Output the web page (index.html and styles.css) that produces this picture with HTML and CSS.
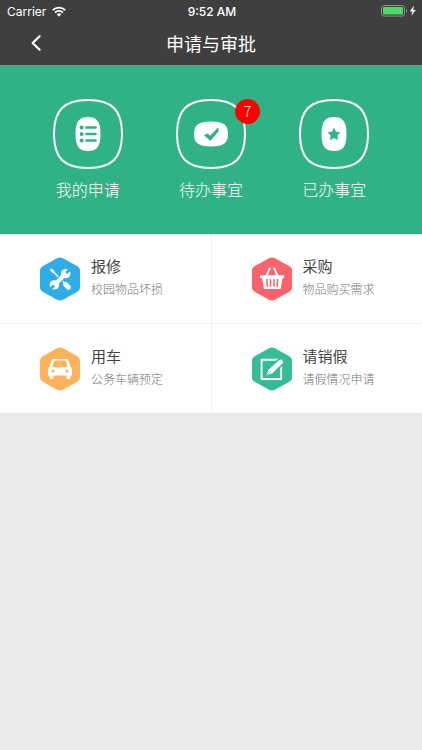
FILE: index.html
```html
<!DOCTYPE html>
<html lang="zh-CN">
<head>
<meta charset="utf-8">
<meta name="viewport" content="width=device-width, initial-scale=1">
<title>申请与审批</title>
<link rel="stylesheet" href="styles.css">
</head>
<body>
<header class="top">
  <div class="status">
    <div class="status-left">
      <span>Carrier</span>
      <svg class="wifi" viewBox="0 0 14 11" aria-hidden="true">
        <path d="M.8 4.100a9 9 0 0 1 12.400 0" fill="none" stroke="#fff" stroke-width="1.900"/>
        <path d="M3 6.500a5.800 5.800 0 0 1 8 0" fill="none" stroke="#fff" stroke-width="1.800"/>
        <path d="M4.700 8.300a3.400 3.400 0 0 1 4.600 0L7 10.700z" fill="#fff"/>
      </svg>
    </div>
    <div class="clock">9:52 AM</div>
    <div class="status-right">
      <svg class="battery" viewBox="0 0 36 12" aria-hidden="true">
        <rect x=".5" y=".5" width="23" height="10.600" rx="2.400" fill="none" stroke="#8f8f8f"/>
        <rect x="2" y="2" width="20" height="7.600" rx="1.200" fill="#4cd964"/>
        <path d="M25 4v3.600q1.300-.5 1.300-1.800T25 4z" fill="#8f8f8f"/>
        <path d="M32.800.8 28.800 6.500h2.500L30.400 10.800 34.800 5h-2.600z" fill="#fff"/>
      </svg>
    </div>
  </div>
  <nav class="nav">
    <button class="back" type="button" aria-label="返回">
      <svg viewBox="0 0 12 18" aria-hidden="true"><path d="M9.600 2.200 2.600 9l7 6.800" fill="none" stroke="#fff" stroke-width="2.200" stroke-linecap="round" stroke-linejoin="round"/></svg>
    </button>
    <h1 class="title">申请与审批</h1>
  </nav>
</header>
<main>
  <section class="hero">
    <a class="entry" href="#mine">
      <span class="ring">
        <svg viewBox="0 0 70 70" aria-hidden="true">
          <path class="outline" d="M35 1C59 1 69 11 69 35S59 69 35 69 1 59 1 35 11 1 35 1z"/>
          <path d="M35 18C43.500 18 47.500 22 47.500 35S43.500 52 35 52 22.500 48 22.500 35 26.500 18 35 18z" fill="#fff"/>
          <g fill="#31b186"><circle cx="28.600" cy="28.500" r="2"/><circle cx="28.600" cy="35" r="2"/><circle cx="28.600" cy="41.500" r="2"/>
          <rect x="32.200" y="27.200" width="11.600" height="2.600" rx="1.300"/><rect x="32.200" y="33.700" width="11.600" height="2.600" rx="1.300"/><rect x="32.200" y="40.200" width="11.600" height="2.600" rx="1.300"/></g>
        </svg>
      </span>
      <span class="entry-label">我的申请</span>
    </a>
    <a class="entry" href="#todo">
      <span class="ring">
        <svg viewBox="0 0 70 70" aria-hidden="true">
          <path class="outline" d="M35 1C59 1 69 11 69 35S59 69 35 69 1 59 1 35 11 1 35 1z"/>
          <path d="M35 22.500C48 22.500 52 26.500 52 35S48 47.500 35 47.500 18 43.500 18 35 22 22.500 35 22.500z" fill="#fff"/>
          <path d="M28.300 36.200 32 34.800 34 37.200 42 28.800 42.300 32.200 34.300 41.600z" fill="#31b186" stroke="#31b186" stroke-width=".6" stroke-linejoin="round"/>
        </svg>
        <span class="badge">7</span>
      </span>
      <span class="entry-label">待办事宜</span>
    </a>
    <a class="entry" href="#done">
      <span class="ring">
        <svg viewBox="0 0 70 70" aria-hidden="true">
          <path class="outline" d="M35 1C59 1 69 11 69 35S59 69 35 69 1 59 1 35 11 1 35 1z"/>
          <path d="M35 18C43.500 18 47.500 22 47.500 35S43.500 52 35 52 22.500 48 22.500 35 26.500 18 35 18z" fill="#fff"/>
          <path d="M35 29.200 36.800 33 41 33.600 38 36.500 38.700 40.700 35 38.700 31.300 40.700 32 36.500 29 33.600 33.200 33z" fill="#31b186" stroke="#31b186" stroke-width=".6" stroke-linejoin="round"/>
        </svg>
      </span>
      <span class="entry-label">已办事宜</span>
    </a>
  </section>
  <section class="grid">
    <a class="card" href="#repair">
      <svg class="hex" viewBox="0 0 42 44" aria-hidden="true">
        <path fill="#2fade6" d="M18 1.300q3-1.500 6 0l14 7.600q3 1.700 3 5v16.200q0 3.300-3 5l-14 7.600q-3 1.500-6 0l-14-7.600q-3-1.700-3-5V13.900q0-3.300 3-5z"/>
        <path d="M13.500 14 25 25.500" stroke="#fff" stroke-width="1.500"/>
        <path d="M11.500 12.200 14.600 13.200 15.200 15.800 12.600 14.900z" fill="#fff" stroke="#fff" stroke-linejoin="round"/>
        <path d="M26.600 27.400 29.400 30.200" stroke="#fff" stroke-width="5" stroke-linecap="round"/>
        <path d="M16 27.600 26 17" stroke="#2fade6" stroke-width="6.400"/>
        <path d="M16 27.600 26 17" stroke="#fff" stroke-width="4.400"/>
        <circle cx="26.800" cy="16.600" r="4.700" fill="#fff"/>
        <circle cx="15.400" cy="27.900" r="4.700" fill="#fff"/>
        <path d="M27.200 16.100 31.800 11.600" stroke="#2fade6" stroke-width="2.800"/>
        <path d="M15 28.500 10.400 33" stroke="#2fade6" stroke-width="2.800"/>
      </svg>
      <span class="card-text"><strong>报修</strong><small>校园物品坏损</small></span>
    </a>
    <a class="card" href="#purchase">
      <svg class="hex" viewBox="0 0 42 44" aria-hidden="true">
        <path fill="#fb636c" d="M18 1.300q3-1.500 6 0l14 7.600q3 1.700 3 5v16.200q0 3.300-3 5l-14 7.600q-3 1.500-6 0l-14-7.600q-3-1.700-3-5V13.900q0-3.300 3-5z"/>
        <path d="M15.300 19 18.700 11.500M26.700 19 23.300 11.500" stroke="#fff" stroke-width="2" stroke-linecap="round"/>
        <path d="M9 18.300h24v2.800H31.600L29.600 32H13L11 21.100H9z" fill="#fff"/>
        <path d="M15.800 22.500l.6 6.700M19.500 22.500v6.700M23 22.500v6.700M26.700 22.500l-.6 6.700" stroke="#fb636c" stroke-width="1.500" stroke-linecap="round"/>
      </svg>
      <span class="card-text"><strong>采购</strong><small>物品购买需求</small></span>
    </a>
    <a class="card" href="#car">
      <svg class="hex" viewBox="0 0 42 44" aria-hidden="true">
        <path fill="#ffb25a" d="M18 1.300q3-1.500 6 0l14 7.600q3 1.700 3 5v16.200q0 3.300-3 5l-14 7.600q-3 1.500-6 0l-14-7.600q-3-1.700-3-5V13.900q0-3.300 3-5z"/>
        <path fill="#fff" fill-rule="evenodd" d="M15 12h12q2 0 2.600 2l2 6q1.400 1 1.400 3v5.500h-1.500v2.200q0 1.500-2 1.500t-2-1.500v-2.200h-13v2.200q0 1.500-2 1.500t-2-1.500v-2.200H9V23q0-2 1.400-3l2-6q.6-2 2.600-2zM15.400 13.600 13.300 20.200h15.400L26.600 13.600z"/>
        <circle cx="14" cy="24" r="1.500" fill="#ffb25a"/><circle cx="28" cy="24" r="1.500" fill="#ffb25a"/>
      </svg>
      <span class="card-text"><strong>用车</strong><small>公务车辆预定</small></span>
    </a>
    <a class="card" href="#leave">
      <svg class="hex" viewBox="0 0 42 44" aria-hidden="true">
        <path fill="#37bc98" d="M18 1.300q3-1.500 6 0l14 7.600q3 1.700 3 5v16.200q0 3.300-3 5l-14 7.600q-3 1.500-6 0l-14-7.600q-3-1.700-3-5V13.900q0-3.300 3-5z"/>
        <path d="M10.600 12.700H30.200V32H10.600z" fill="none" stroke="#fff" stroke-width="1.900" stroke-linejoin="round"/>
        <path d="M15.400 28.600 17.600 22.600 28.300 13Q30 11.800 31.400 13.200T31.600 16.300L21.400 26.200z" fill="#fff" stroke="#37bc98" stroke-width="3.600" stroke-linejoin="round" paint-order="stroke"/>
        <path d="M15.800 28.200 19.800 24.200" stroke="#37bc98" stroke-width=".8"/>
      </svg>
      <span class="card-text"><strong>请销假</strong><small>请假情况申请</small></span>
    </a>
  </section>
</main>
</body>
</html>
```
FILE: styles.css
```css
* {
  box-sizing: border-box;
}

body {
  margin: 0;
  background: #e9e9e9;
  font-family: "Noto Sans CJK SC", sans-serif;
}

a {
  color: inherit;
  text-decoration: none;
}

svg {
  display: block;
}

.top {
  background: #3f3f3f;
  color: #fff;
  border-bottom: 1px solid #76988c;
}

.status {
  display: grid;
  grid-template-columns: 1fr auto 1fr;
  align-items: center;
  height: 22px;
  padding: 0 5px 0 7px;
  font-family: Inter, sans-serif;
  font-size: 12px;
}

.status-left {
  display: flex;
  align-items: center;
  gap: 6px;
}

.wifi {
  width: 14px;
  height: 11px;
}

.clock {
  font-weight: 500;
}

.status-right {
  display: flex;
  justify-content: flex-end;
}

.battery {
  width: 36px;
  height: 12px;
}

.nav {
  display: grid;
  grid-template-columns: 1fr auto 1fr;
  align-items: center;
  height: 43px;
  padding-bottom: 2px;
}

.back {
  justify-self: start;
  margin-left: 22px;
  padding: 8px;
  border: 0;
  background: none;
}

.back svg {
  width: 12px;
  height: 18px;
}

.title {
  margin: 0;
  font-size: 18px;
  font-weight: 400;
  line-height: 24px;
}

.hero {
  display: flex;
  padding: 33px 26px;
  background: #31b186;
  color: #fff;
}

.entry {
  flex: 1;
  display: flex;
  flex-direction: column;
  align-items: center;
  gap: 8px;
}

.ring {
  position: relative;
  width: 70px;
  height: 70px;
}

.outline {
  fill: none;
  stroke: #fff;
  stroke-width: 2;
}

.badge {
  position: absolute;
  top: 0;
  right: -14px;
  width: 25px;
  height: 25px;
  border-radius: 50%;
  background: #f00;
  font-size: 14px;
  font-weight: 300;
  line-height: 24px;
  text-align: center;
}

.entry-label {
  font-size: 16px;
  font-weight: 300;
  line-height: 24px;
}

.grid {
  display: grid;
  grid-template-columns: 1fr 1fr;
  gap: 1px;
  background: #f1f1f1;
}

.card {
  display: flex;
  align-items: center;
  gap: 10px;
  height: 89px;
  padding-left: 39px;
  background: #fff;
}

.hex {
  width: 42px;
  height: 44px;
}

.card-text {
  display: flex;
  flex-direction: column;
  gap: 2px;
  padding-bottom: 3px;
}

.card-text strong {
  color: #444;
  font-size: 15px;
  font-weight: 400;
  line-height: 22px;
}

.card-text small {
  color: #777;
  font-size: 12px;
  font-weight: 300;
  line-height: 20px;
}
```
